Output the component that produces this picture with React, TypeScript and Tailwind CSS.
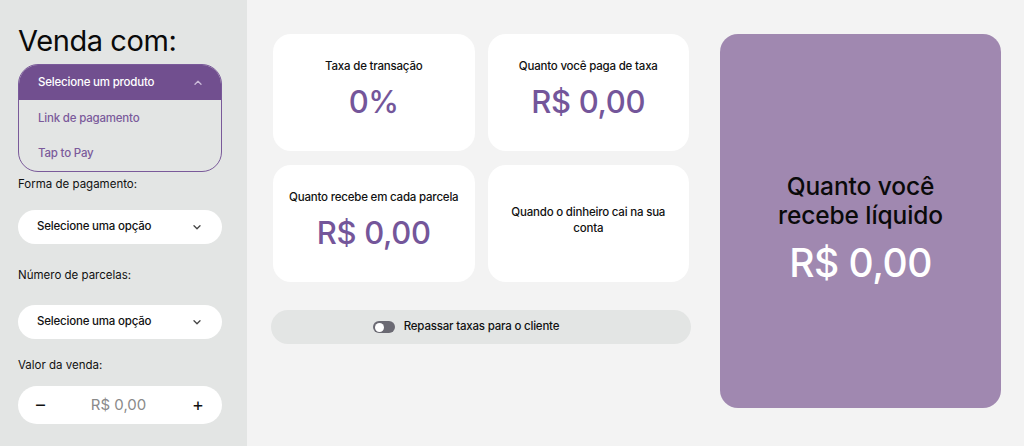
import React from "react";

const Chevron = ({ up = false, color = "#444" }: { up?: boolean; color?: string }) => (
  <svg width="8" height="5" viewBox="0 0 8 5" fill="none">
    <path
      d={up ? "M1 4.2 L4 1.2 L7 4.2" : "M1 0.8 L4 3.8 L7 0.8"}
      stroke={color}
      strokeWidth="1.3"
      strokeLinecap="round"
      strokeLinejoin="round"
    />
  </svg>
);

const Card = ({ title, value, narrow = false }: { title: string; value?: string; narrow?: boolean }) => (
  <div className="h-[117px] bg-white rounded-[18px] flex flex-col items-center justify-center text-center px-[12px] pb-[7px]">
    <div
      className={`text-[11.5px] font-medium text-[#111] leading-[16px] tracking-[-0.2px] ${narrow ? "max-w-[162px]" : ""}`}
    >
      {title}
    </div>
    {value && (
      <div className="text-[31px] font-medium text-[#74569a] leading-[36px] mt-[10px] tracking-[-0.3px]">{value}</div>
    )}
  </div>
);

export default function App() {
  return (
    <div className="flex h-[446px] w-[1024px] overflow-hidden" style={{ fontFamily: "Inter, 'Noto Sans', sans-serif" }}>
      <aside className="w-[247px] shrink-0 bg-[#e3e5e4] px-[18px] pt-[24px]">
        <h1 className="text-[29px] leading-[34px] text-[#0a0a0a] font-normal tracking-[-0.4px]">Venda com:</h1>
        <div className="mt-[6px] w-[204px] rounded-[20px] border border-[#7a5a9a] overflow-hidden">
          <div className="h-[35px] bg-[#714f8f] flex items-center justify-between pl-[19px] pr-[19px]">
            <span className="text-[11.5px] font-medium text-white tracking-[-0.2px]">Selecione um produto</span>
            <Chevron up color="#cbbbd9" />
          </div>
          <div className="h-[37px] pt-[1px] flex items-center pl-[19px] text-[11.5px] font-medium tracking-[-0.2px] text-[#7b5a9b]">Link de pagamento</div>
          <div className="h-[34px] flex items-center pl-[19px] text-[11.5px] font-medium tracking-[-0.2px] text-[#7b5a9b]">Tap to Pay</div>
        </div>
        <div className="mt-[4px] text-[11.5px] leading-[16px] text-[#111]">Forma de pagamento:</div>
        <div className="mt-[18px] h-[34px] w-[204px] bg-white rounded-full flex items-center justify-between pl-[19px] pr-[21px]">
          <span className="text-[11.5px] font-medium tracking-[-0.2px] text-[#111]">Selecione uma opção</span>
          <Chevron />
        </div>
        <div className="mt-[23px] text-[11.5px] leading-[16px] text-[#111]">Número de parcelas:</div>
        <div className="mt-[22px] h-[34px] w-[204px] bg-white rounded-full flex items-center justify-between pl-[19px] pr-[21px]">
          <span className="text-[11.5px] font-medium tracking-[-0.2px] text-[#111]">Selecione uma opção</span>
          <Chevron />
        </div>
        <div className="mt-[18px] text-[11.5px] leading-[16px] text-[#111]">Valor da venda:</div>
        <div className="mt-[13px] h-[38px] w-[204px] bg-white rounded-full flex items-center justify-between pl-[18px] pr-[18px]">
          <span className="text-[18px] text-[#111] leading-none">–</span>
          <span className="text-[15px] text-[#8a8a8a]">R$ 0,00</span>
          <span className="text-[18px] text-[#111] leading-none">+</span>
        </div>
      </aside>
      <main className="flex-1 bg-[#f3f3f3] pt-[34px] pl-[24px] pr-[23px] flex gap-[29px]">
        <div className="w-[420px]">
          <div className="grid grid-cols-2 gap-x-[13px] gap-y-[14px] px-[2px]">
            <Card title="Taxa de transação" value="0%" />
            <Card title="Quanto você paga de taxa" value="R$ 0,00" />
            <Card title="Quanto recebe em cada parcela" value="R$ 0,00" />
            <Card title="Quando o dinheiro cai na sua conta" narrow />
          </div>
          <div className="mt-[28px] h-[34px] rounded-full bg-[#e3e5e4] flex items-center justify-center gap-[9px] pr-[30px]">
            <div className="w-[22px] h-[12px] rounded-full bg-[#6b6a73] flex items-center pl-[2px]">
              <div className="w-[9px] h-[9px] rounded-full bg-white" />
            </div>
            <span className="text-[11.5px] font-medium tracking-[-0.2px] text-[#111]">Repassar taxas para o cliente</span>
          </div>
        </div>
        <div className="w-[281px] h-[374px] rounded-[18px] bg-[#a088b0] flex flex-col items-center justify-center text-center pt-[14px]">
          <div className="text-[24.5px] leading-[29px] font-medium text-[#0a0a0a] tracking-[-0.1px]">Quanto você<br />recebe líquido</div>
          <div className="mt-[11px] text-[39px] leading-[44px] font-medium text-white tracking-[-0.5px]">R$ 0,00</div>
        </div>
      </main>
    </div>
  );
}
